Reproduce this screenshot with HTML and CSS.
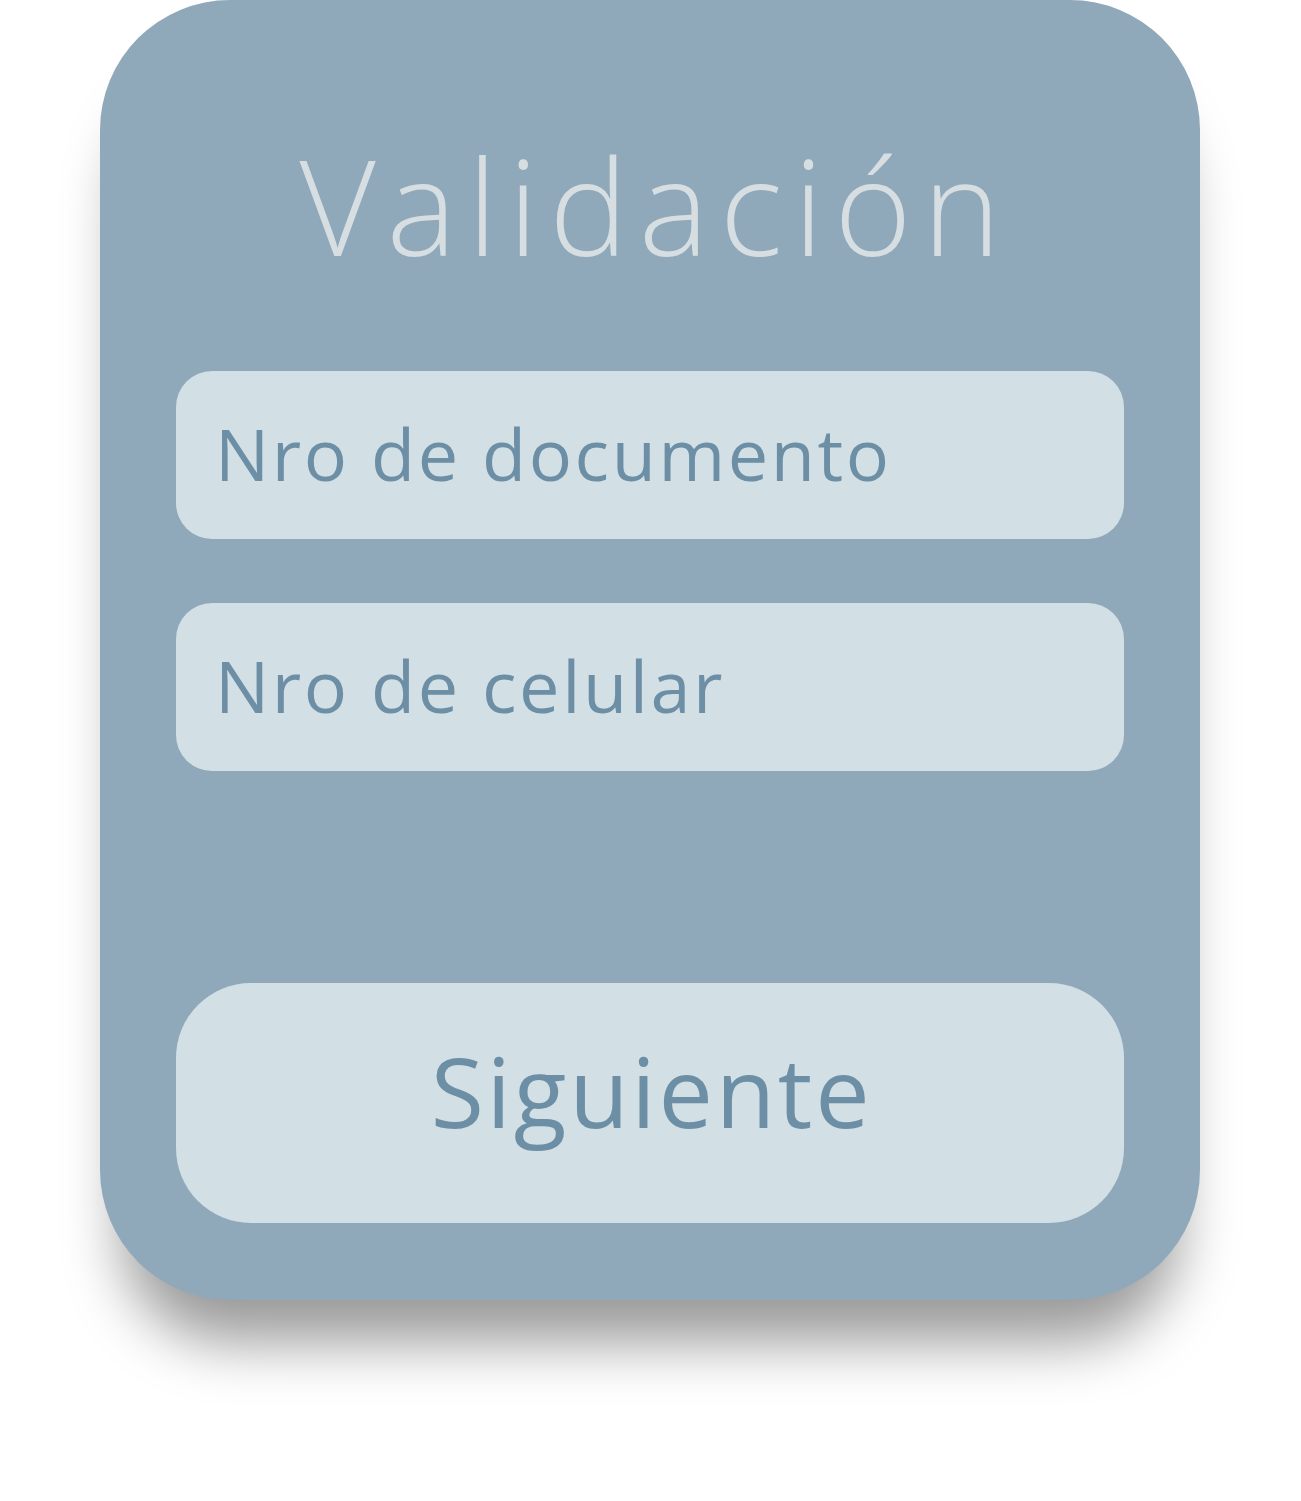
FILE: index.html
```html
<!DOCTYPE html>
<html lang="es">
<head>
<meta charset="utf-8">
<title>Validación</title>
<link rel="stylesheet" href="styles.css">
</head>
<body>
<main class="card">
  <h1 class="title">Validación</h1>
  <div class="fields">
    <div class="field">Nro de documento</div>
    <div class="field">Nro de celular</div>
  </div>
  <button class="next" type="button">Siguiente</button>
</main>
</body>
</html>
```

FILE: styles.css
```css
html, body {
  margin: 0;
  padding: 0;
  background: #ffffff;
}

body {
  font-family: "Open Sans", "Noto Sans", sans-serif;
  min-height: 1501px;
}

.card {
  box-sizing: border-box;
  width: 1100px;
  height: 1300px;
  margin-left: 100px;
  background: #8fa9bb;
  border-radius: 130px;
  box-shadow: 0 64px 58px -22px rgba(0, 0, 0, 0.4);
  padding: 0 76px 77px 76px;
  display: flex;
  flex-direction: column;
}

.title {
  margin: 0;
  padding: 139px 0 0 11px;
  height: 371px;
  flex-shrink: 0;
  box-sizing: border-box;
  font-size: 132px;
  line-height: 1;
  font-weight: 300;
  color: #d6dee2;
  text-align: center;
  letter-spacing: 11px;
}

.fields {
  display: flex;
  flex-direction: column;
  gap: 64px;
}

.field {
  height: 168px;
  box-sizing: border-box;
  background: #d2dfe5;
  border-radius: 36px;
  padding: 0 0 4px 39px;
  display: flex;
  align-items: center;
  font-size: 72px;
  color: #6d8fa6;
  letter-spacing: 2.6px;
}

.next {
  margin-top: auto;
  height: 240px;
  flex-shrink: 0;
  border: 0;
  background: #d2dfe5;
  border-radius: 75px;
  font-family: inherit;
  font-size: 97px;
  color: #6d8fa6;
  letter-spacing: 2.7px;
  padding: 0 0 26px 3px;
  cursor: pointer;
}
```
